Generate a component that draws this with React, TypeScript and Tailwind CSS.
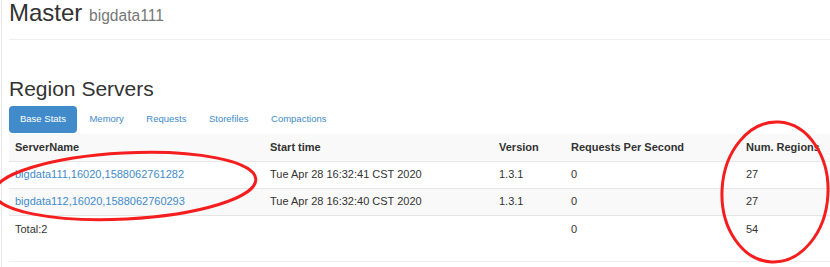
import React from 'react'

const tabs = ['Base Stats', 'Memory', 'Requests', 'Storefiles', 'Compactions']

const servers = [
  { name: 'bigdata111,16020,1588062761282', start: 'Tue Apr 28 16:32:41 CST 2020', version: '1.3.1', rps: '0', regions: '27' },
  { name: 'bigdata112,16020,1588062760293', start: 'Tue Apr 28 16:32:40 CST 2020', version: '1.3.1', rps: '0', regions: '27' },
]

export default function App() {
  return (
    <div className="relative h-[267px] w-[830px] overflow-hidden bg-white text-[#333] font-['Liberation_Sans',Arial,sans-serif]">
      <div className="ml-[1px] h-full border-l border-[#e8e8e8] pl-[7px]">
        {/* page header */}
        <div className="h-[40px] border-b border-[#eeeeee]">
          <h1 className="h-[26px] text-[24px] leading-[1.1] font-normal">
            Master <small className="text-[15.6px] text-[#777]">bigdata111</small>
          </h1>
        </div>

        <h2 className="mt-[37px] h-[23px] text-[21px] leading-[1.1] font-normal">Region Servers</h2>

        {/* pills */}
        <ul className="mt-[6px] flex h-[27px] gap-[2.5px] text-[9.5px]">
          {tabs.map((t, i) => (
            <li
              key={t}
              className={
                i === 0
                  ? 'flex items-center rounded-[4px] bg-[#428bca] px-[11px] text-white'
                  : 'flex items-center rounded-[4px] px-[10px] text-[#428bca]'
              }
            >
              {t}
            </li>
          ))}
        </ul>

        <table className="mt-[1px] w-[821px] table-fixed border-collapse text-[11px]">
          <colgroup>
            <col className="w-[255px]" />
            <col className="w-[229px]" />
            <col className="w-[72px]" />
            <col className="w-[175px]" />
            <col />
          </colgroup>
          <tbody>
            <tr className="h-[27px] bg-[#f9f9f9] text-left font-bold">
              <th className="px-[6px]">ServerName</th>
              <th className="px-[6px]">Start time</th>
              <th className="px-[6px]">Version</th>
              <th className="px-[6px]">Requests Per Second</th>
              <th className="px-[6px]">Num. Regions</th>
            </tr>
            {servers.map((s, i) => (
              <tr key={s.name} className={i % 2 === 1 ? 'h-[27px] border-t border-[#e6e6e6] bg-[#f9f9f9]' : 'h-[27px] border-t border-[#e6e6e6]'}>
                <td className="px-[6px] text-[#428bca]">{s.name}</td>
                <td className="px-[6px]">{s.start}</td>
                <td className="px-[6px]">{s.version}</td>
                <td className="px-[6px]">{s.rps}</td>
                <td className="px-[6px]">{s.regions}</td>
              </tr>
            ))}
            <tr className="h-[27px] border-t border-[#e6e6e6]">
              <td className="px-[6px]">Total:2</td>
              <td className="px-[6px]"></td>
              <td className="px-[6px]"></td>
              <td className="px-[6px]">0</td>
              <td className="px-[6px]">54</td>
            </tr>
          </tbody>
        </table>

        <div className="mt-[19px] border-t border-[#eeeeee]" />
      </div>

      {/* hand-drawn annotations */}
      <svg className="pointer-events-none absolute left-0 top-0" width="830" height="267" viewBox="0 0 830 267">
        <ellipse cx="125" cy="186" rx="131" ry="33" transform="rotate(-3 125 186)" fill="none" stroke="#f51d1d" strokeWidth="3" />
        <ellipse cx="775" cy="192" rx="53" ry="70" transform="rotate(3 775 192)" fill="none" stroke="#f51d1d" strokeWidth="3" />
      </svg>
    </div>
  )
}
